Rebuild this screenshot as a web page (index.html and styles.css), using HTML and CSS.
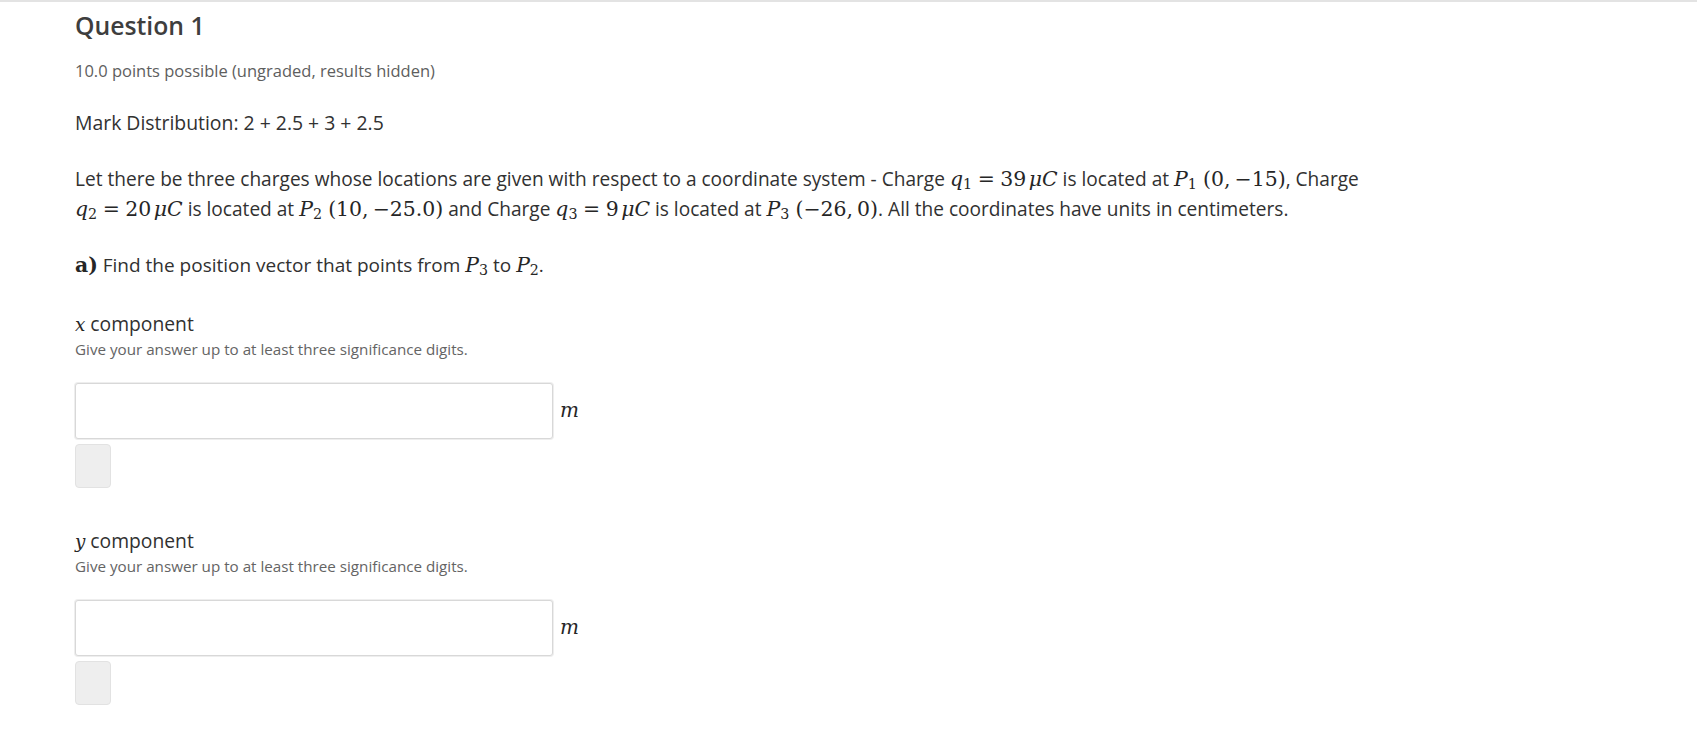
FILE: index.html
```html
<!DOCTYPE html>
<html lang="en">
<head>
<meta charset="utf-8">
<title>Question 1</title>
<link rel="stylesheet" href="styles.css">
</head>
<body>
<main class="problem">
  <h3 class="title">Question 1</h3>
  <div class="meta">10.0 points possible (ungraded, results hidden)</div>
  <p class="marks">Mark Distribution: 2 + 2.5 + 3 + 2.5</p>
  <p class="text">Let there be three charges whose locations are given with respect to a coordinate system - Charge <span class="math"><i>q</i><sub>1</sub><span class="rel">=</span>39<span class="thin"></span><i>μC</i></span> is located at <span class="math"><i>P</i><sub>1</sub><span class="gap"></span>(0,<span class="comma"></span>−15)</span>, Charge<br><span class="math"><i>q</i><sub>2</sub><span class="rel">=</span>20<span class="thin"></span><i>μC</i></span> is located at <span class="math"><i>P</i><sub>2</sub><span class="gap"></span>(10,<span class="comma"></span>−25.0)</span> and Charge <span class="math"><i>q</i><sub>3</sub><span class="rel">=</span>9<span class="thin"></span><i>μC</i></span> is located at <span class="math"><i>P</i><sub>3</sub><span class="gap"></span>(−26,<span class="comma"></span>0)</span>. All the coordinates have units in centimeters.</p>
  <p class="text part"><b class="math bold">a)</b> Find the position vector that points from <span class="math"><i>P</i><sub>3</sub></span> to <span class="math"><i>P</i><sub>2</sub></span>.</p>

  <section class="field">
    <div class="label"><span class="math var"><i>x</i></span> component</div>
    <div class="hint">Give your answer up to at least three significance digits.</div>
    <div class="answer-row">
      <input class="answer" type="text" aria-label="x component">
      <span class="unit math"><i>m</i></span>
    </div>
    <button class="submit" type="button" aria-label="Submit"></button>
  </section>

  <section class="field">
    <div class="label"><span class="math var"><i>y</i></span> component</div>
    <div class="hint">Give your answer up to at least three significance digits.</div>
    <div class="answer-row">
      <input class="answer" type="text" aria-label="y component">
      <span class="unit math"><i>m</i></span>
    </div>
    <button class="submit" type="button" aria-label="Submit"></button>
  </section>
</main>
</body>
</html>
```

FILE: styles.css
```css
html, body {
  margin: 0;
  padding: 0;
  background: #ffffff;
}

body {
  border-top: 2px solid #e3e3e3;
  font-family: "Open Sans", "Noto Sans", sans-serif;
  color: #313131;
}

.problem {
  padding: 9px 0 0 75px;
}

.title {
  margin: 0;
  font-size: 24.75px;
  line-height: 30px;
  font-weight: 600;
  color: #3e3e3e;
}

.meta {
  margin-top: 18px;
  font-size: 16.5px;
  line-height: 24px;
  color: #5e5e5e;
}

.marks {
  margin: 26px 0 0;
  font-size: 19.4px;
  line-height: 28px;
  color: #313131;
}

.text {
  margin: 27px 0 0;
  font-size: 19.1px;
  line-height: 30px;
  color: #313131;
}

.text.part {
  margin-top: 26px;
  font-size: 19px;
}

.math {
  font-family: "DejaVu Serif", "Liberation Serif", serif;
  font-size: 1.07em;
  line-height: 1;
  white-space: nowrap;
  color: #262626;
}

.math i {
  font-style: italic;
}

.math sub {
  font-size: 0.7em;
  line-height: 0;
  vertical-align: -0.22em;
  font-style: normal;
}

.math .rel {
  margin: 0 0.27em;
}

.math .thin {
  display: inline-block;
  width: 0.12em;
}

.math .comma {
  display: inline-block;
  width: 0.2em;
}

.math .gap {
  display: inline-block;
  width: 0.3em;
}

.math.bold {
  font-weight: 700;
}

.field {
  margin-top: 30px;
}

.field + .field {
  margin-top: 39px;
}

.label {
  font-size: 19.3px;
  line-height: 28px;
  color: #313131;
}

.math.var {
  font-size: 0.95em;
}

.hint {
  font-size: 15.2px;
  line-height: 22px;
  color: #646464;
}

.answer-row {
  margin-top: 23px;
  display: flex;
  align-items: center;
  gap: 7px;
}

.answer {
  box-sizing: border-box;
  width: 478px;
  height: 56px;
  margin: 0;
  border: 1px solid #d8d8d8;
  border-radius: 3px;
  box-shadow: 0 0 0 1px #eeeeee;
  background: #ffffff;
  font: inherit;
  padding: 0 10px;
}

.unit {
  font-size: 20px;
  padding-bottom: 3px;
}

.submit {
  display: block;
  box-sizing: border-box;
  width: 36px;
  height: 44px;
  margin-top: 5px;
  padding: 0;
  border: 1px solid #e2e2e2;
  border-radius: 4px;
  background: #eeeeee;
}
```
